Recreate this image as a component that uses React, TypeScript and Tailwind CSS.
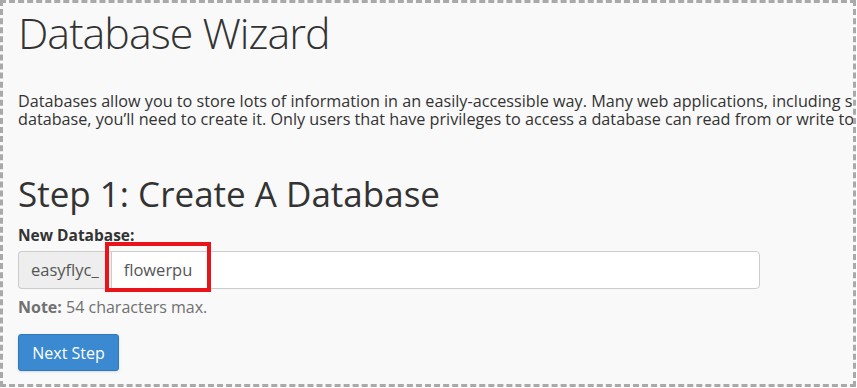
export default function App() {
  return (
    <div className="h-[388px] w-[857px] overflow-hidden bg-white">
      <div
        className="h-[387px] w-[856px] overflow-hidden border-[3px] border-dashed border-[#a9a9a9] bg-[#f9f9f9] pl-[15px] pt-[5px] text-[#333]"
        style={{ fontFamily: '"Open Sans", "Noto Sans", sans-serif' }}
      >
        {/* Header */}
        <h1 className="whitespace-nowrap text-[43px] font-light leading-[50px] tracking-[-1px] text-[#333]">
          Database Wizard
        </h1>
        <p className="mt-[34px] whitespace-nowrap text-[16.2px] leading-[18px]">
          Databases allow you to store lots of information in an easily-accessible way. Many web applications, including software
          <br />
          database, you’ll need to create it. Only users that have privileges to access a database can read from or write to that database.
        </p>

        {/* Step 1 */}
        <h2 className="mt-[46px] whitespace-nowrap text-[35px] font-normal leading-[40px]">
          Step 1: Create A Database
        </h2>
        <label className="mt-[12px] block text-[15.5px] font-bold leading-[18px]">New Database:</label>
        <div className="relative mt-[7px] flex h-[38px] w-[742px] text-[16.5px]">
          <span className="flex items-center rounded-l-[4px] border border-r-0 border-[#ccc] bg-[#eeeeee] px-[12px] text-[#555]">
            easyflyc_
          </span>
          <div className="flex flex-1 items-center rounded-r-[4px] border border-[#ccc] bg-white pl-[12px] text-[#555]">
            flowerpu
          </div>
          <div className="pointer-events-none absolute left-[87px] top-[-9px] h-[50px] w-[106px] border-[4px] border-[#e8141a]" />
        </div>
        <p className="mt-[9px] text-[16px] leading-[18px] text-[#707070]">
          <span className="font-bold">Note:</span> 54 characters max.
        </p>
        <button className="mt-[18px] h-[37px] w-[101px] rounded-[3px] border border-[#2f78bd] bg-[#3b89d1] text-[16px] text-white shadow-sm">
          Next Step
        </button>
      </div>
    </div>
  );
}
